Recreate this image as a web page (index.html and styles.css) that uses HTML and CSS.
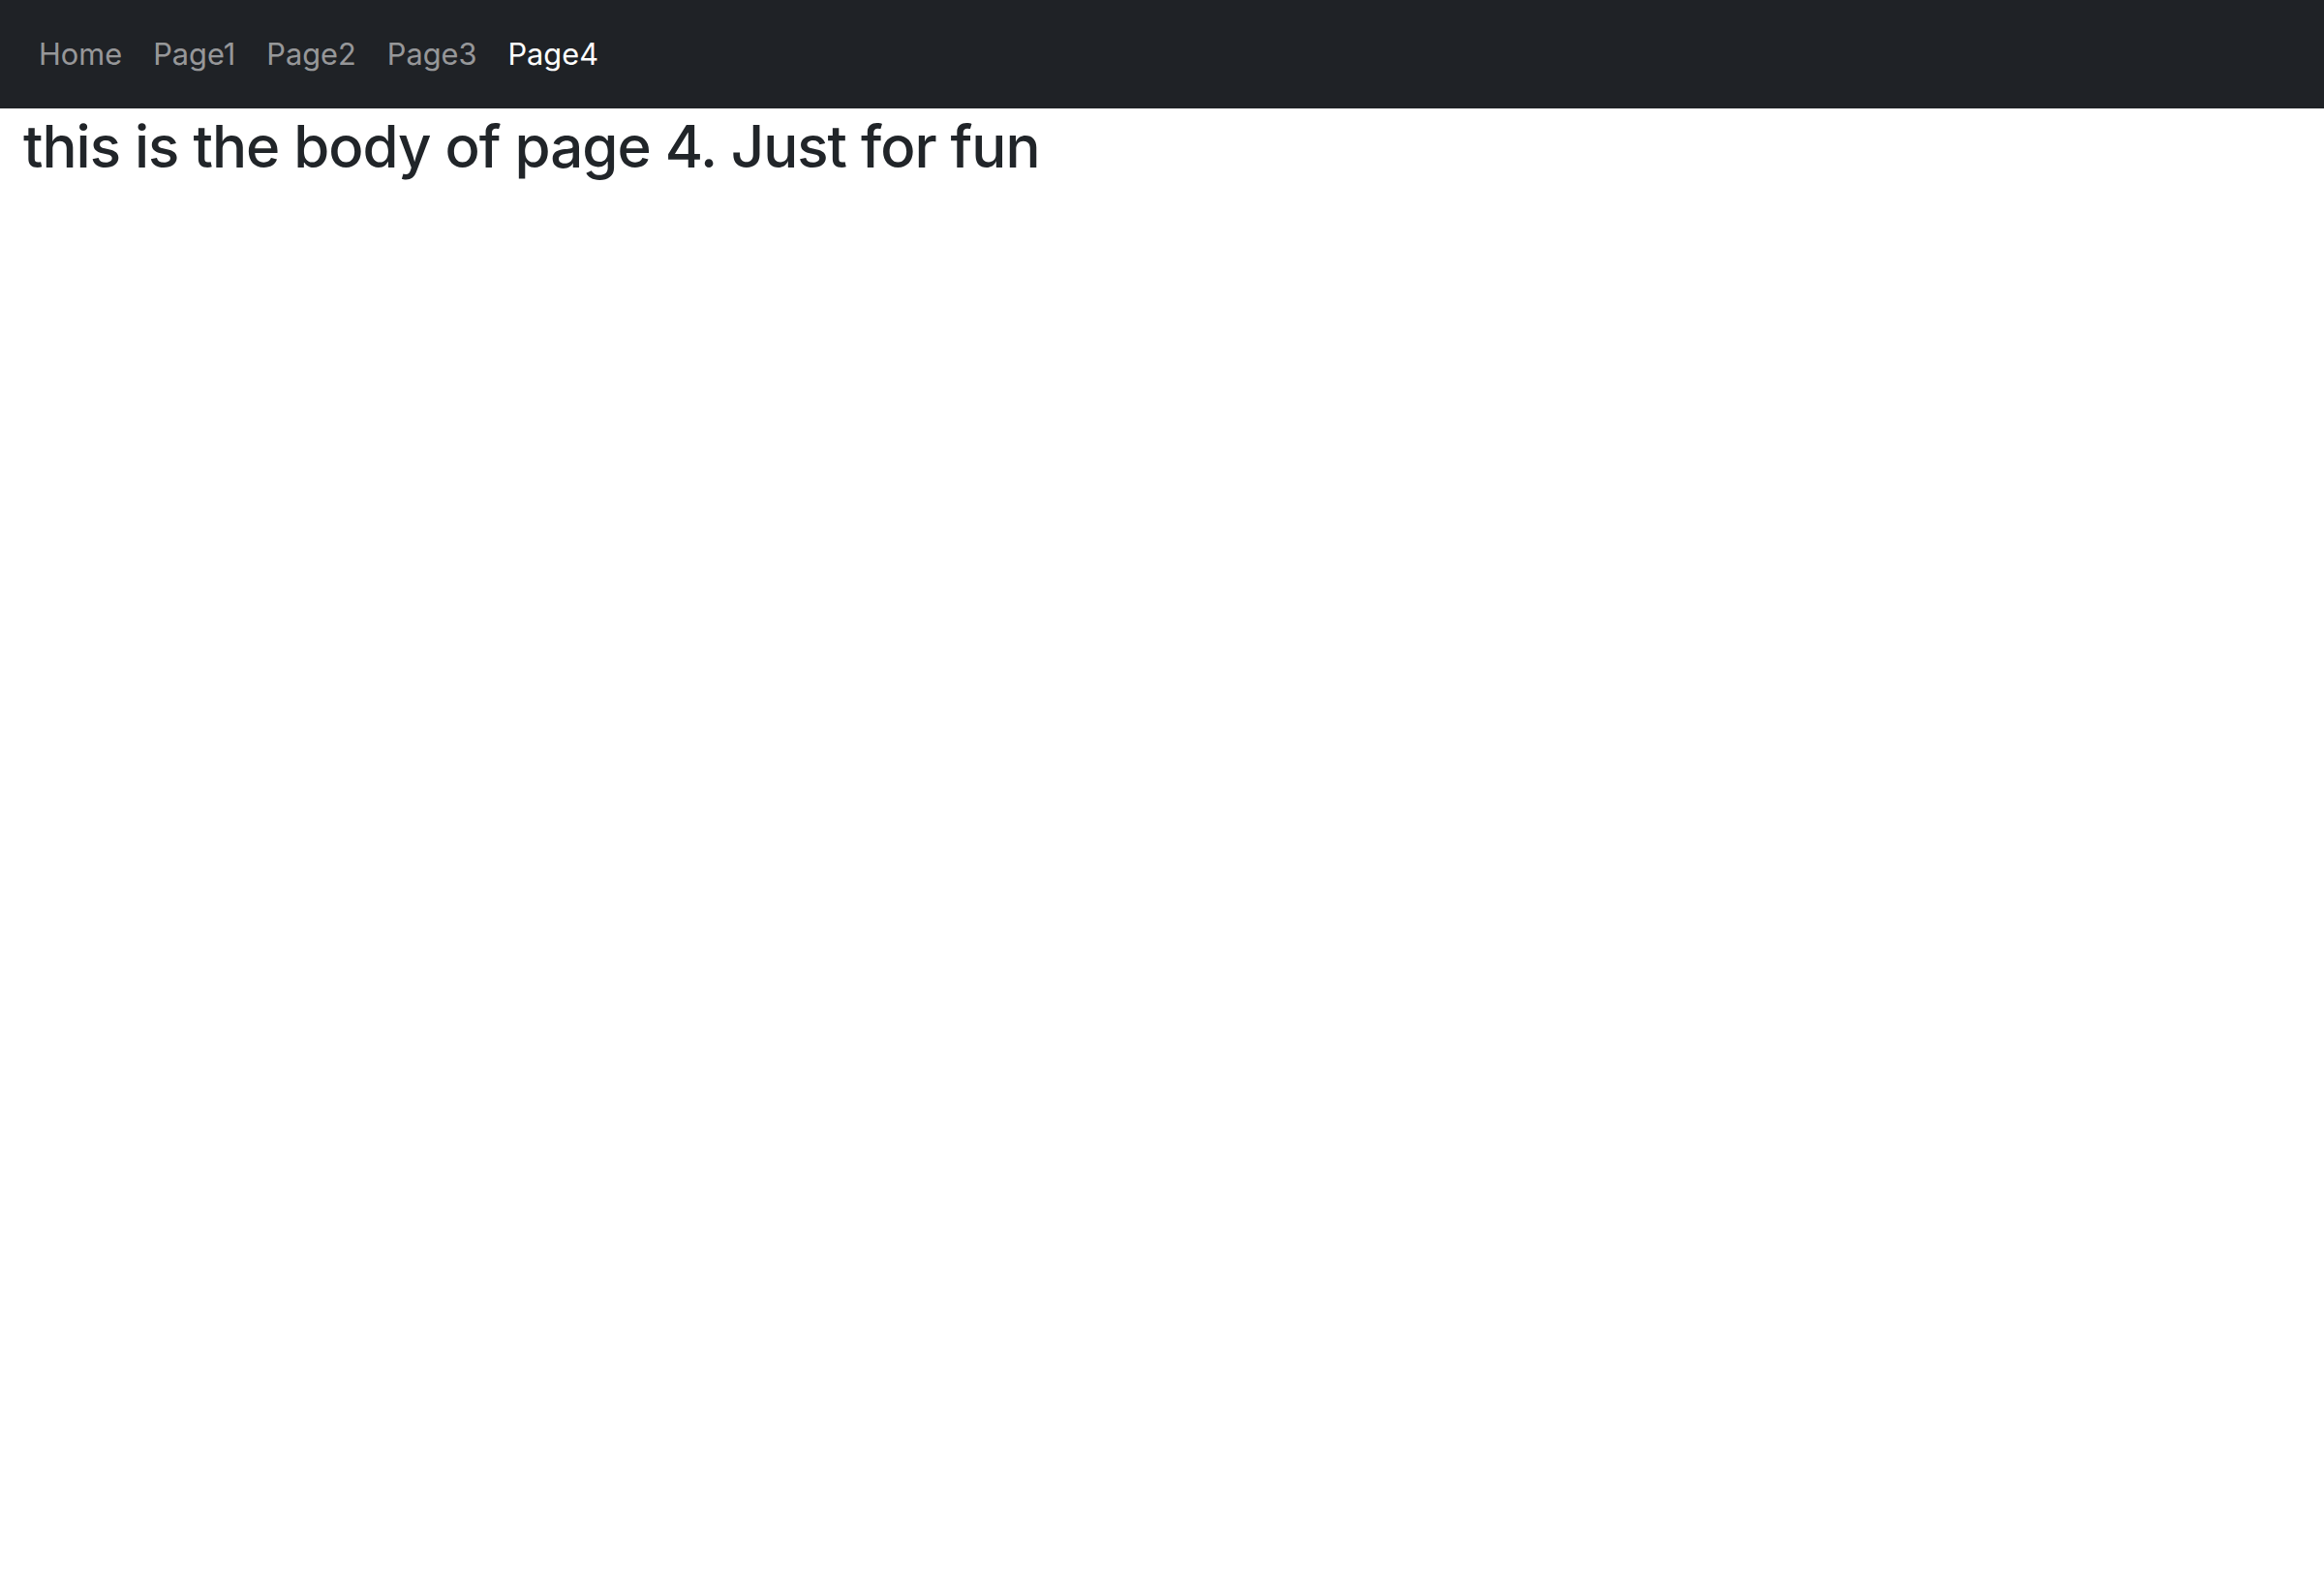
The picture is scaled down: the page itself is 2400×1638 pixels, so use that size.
FILE: index.html
```html
<!DOCTYPE html>
<html lang="en">
<head>
<meta charset="utf-8">
<title>Page4</title>
<link rel="stylesheet" href="styles.css">
</head>
<body>
<nav class="navbar">
  <ul class="nav">
    <li><a class="nav-link" href="#">Home</a></li>
    <li><a class="nav-link" href="#">Page1</a></li>
    <li><a class="nav-link" href="#">Page2</a></li>
    <li><a class="nav-link" href="#">Page3</a></li>
    <li><a class="nav-link active" href="#">Page4</a></li>
  </ul>
</nav>
<main class="content">
  <h1 class="title">this is the body of page 4. Just for fun</h1>
</main>
</body>
</html>
```

FILE: styles.css
```css
html, body {
  margin: 0;
  padding: 0;
  background: #fff;
}
body {
  font-family: Inter, "Liberation Sans", sans-serif;
  color: #212529;
}
.navbar {
  background: #1f2226;
  height: 112px;
  box-sizing: border-box;
  padding: 16px 24px;
  display: flex;
  align-items: center;
}
.nav {
  list-style: none;
  margin: 0;
  padding: 0;
  display: flex;
}
.nav-link {
  display: block;
  padding: 16px 16px;
  font-size: 30.75px;
  line-height: 48px;
  color: rgba(255, 255, 255, 0.55);
  text-decoration: none;
}
.nav-link.active {
  color: #fff;
}
.content {
  padding: 3px 24px 0;
}
.title {
  margin: 0;
  font-size: 60px;
  font-weight: 500;
  line-height: 1.2;
  letter-spacing: -1px;
}
```
